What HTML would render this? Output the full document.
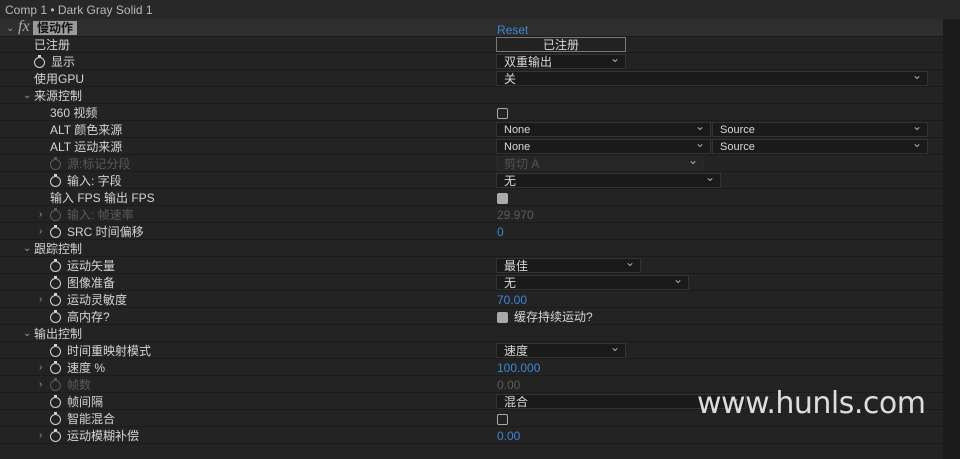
<!DOCTYPE html><html><head><meta charset="utf-8"><style>
body{margin:0;width:960px;height:459px;background:#232323;overflow:hidden;position:relative;font-family:"Liberation Sans","Noto Sans CJK SC",sans-serif;font-size:12px;color:#d4d4d4}
.hdr{position:absolute;left:0;top:0;width:960px;height:19px;background:#282828;color:#b8b8b8;font-size:12px;line-height:21px;padding-left:5px;box-sizing:border-box}
.strip{position:absolute;left:943px;top:19px;width:17px;height:440px;background:#1c1c1c}
.row{position:absolute;left:0;width:943px;height:17px;border-bottom:1px solid #1b1b1b;box-sizing:border-box}
.l{position:absolute;top:1px;line-height:16px;white-space:nowrap}
.dim{color:#5a5a5a}
.sw{display:inline-block;width:9px;height:9px;border:1.5px solid currentColor;border-radius:50%;vertical-align:-2px;margin-right:6px;position:relative}
.sw:before{content:"";position:absolute;left:3px;top:-3px;width:3px;height:1.5px;background:currentColor}
.tw{position:absolute;top:1px;line-height:16px;color:#999;font-size:10px}
.dd{position:absolute;top:1px;height:15px;background:#1a1a1a;border:1px solid #333;box-sizing:border-box;line-height:14px;padding-left:7px;font-size:12px;color:#d8d8d8}
.dd:after{content:"⌄";position:absolute;right:5px;top:-4px;color:#aaa;font-size:12px}
.dd.n:after{content:none}
.dd.s{font-size:11px}
.blue{color:#3a86d6}
.cb{position:absolute;top:4px;width:9px;height:9px;border:1.5px solid #aaa;border-radius:2px}
.cbk{background:#aaa}
</style></head><body>
<div class="hdr">Comp 1 • Dark Gray Solid 1</div>
<div class="strip"></div>
<div class="row" style="top:19px;height:18px;background:#2e2e2e">
<span class="tw" style="left:6px;top:2px">⌄</span><span class="l" style="left:18px;font-style:italic;color:#aaa;font-family:'Liberation Serif',serif;font-size:16px;top:0">fx</span>
<span class="l" style="left:33px;background:#9a9a9a;color:#111;font-weight:bold;padding:0 4px;top:2px;line-height:14px">慢动作</span>
<span class="l blue" style="left:497px;top:3px">Reset</span></div>

<div class="row" style="top:36px"><span class="l" style="left:34px">已注册</span><div class="dd n" style="left:496px;width:130px;border:1px solid #777;background:#222;text-align:center;padding:0;top:1px">已注册</div></div>
<div class="row" style="top:53px"><span class="l" style="left:34px"><i class="sw"></i>显示</span><div class="dd" style="left:496px;width:130px">双重输出</div></div>
<div class="row" style="top:70px"><span class="l" style="left:34px">使用GPU</span><div class="dd" style="left:496px;width:432px">关</div></div>
<div class="row" style="top:87px"><span class="tw" style="left:23px">⌄</span><span class="l" style="left:34px">来源控制</span></div>
<div class="row" style="top:104px"><span class="l" style="left:50px">360 视频</span><div class="cb" style="left:497px"></div></div>
<div class="row" style="top:121px"><span class="l" style="left:50px">ALT 颜色来源</span><div class="dd s" style="left:496px;width:215px">None</div><div class="dd s" style="left:712px;width:216px">Source</div></div>
<div class="row" style="top:138px"><span class="l" style="left:50px">ALT 运动来源</span><div class="dd s" style="left:496px;width:215px">None</div><div class="dd s" style="left:712px;width:216px">Source</div></div>
<div class="row" style="top:155px"><span class="l dim" style="left:50px"><i class="sw"></i>源:标记分段</span><div class="dd dim" style="left:496px;width:208px;background:#262626;border-color:#2a2a2a;color:#555">剪切 A</div></div>
<div class="row" style="top:172px"><span class="l" style="left:50px"><i class="sw"></i>输入: 字段</span><div class="dd" style="left:496px;width:225px">无</div></div>
<div class="row" style="top:189px"><span class="l" style="left:50px">输入 FPS  输出 FPS</span><div class="cb cbk" style="left:497px"></div></div>
<div class="row" style="top:206px"><span class="tw" style="left:39px">›</span><span class="l dim" style="left:50px"><i class="sw"></i>输入: 帧速率</span><span class="l dim" style="left:497px">29.970</span></div>
<div class="row" style="top:223px"><span class="tw" style="left:39px">›</span><span class="l" style="left:50px"><i class="sw"></i>SRC 时间偏移</span><span class="l blue" style="left:497px">0</span></div>
<div class="row" style="top:240px"><span class="tw" style="left:23px">⌄</span><span class="l" style="left:34px">跟踪控制</span></div>
<div class="row" style="top:257px"><span class="l" style="left:50px"><i class="sw"></i>运动矢量</span><div class="dd" style="left:496px;width:145px">最佳</div></div>
<div class="row" style="top:274px"><span class="l" style="left:50px"><i class="sw"></i>图像准备</span><div class="dd" style="left:496px;width:193px">无</div></div>
<div class="row" style="top:291px"><span class="tw" style="left:39px">›</span><span class="l" style="left:50px"><i class="sw"></i>运动灵敏度</span><span class="l blue" style="left:497px">70.00</span></div>
<div class="row" style="top:308px"><span class="l" style="left:50px"><i class="sw"></i>高内存?</span><div class="cb cbk" style="left:497px"></div><span class="l" style="left:514px">缓存持续运动?</span></div>
<div class="row" style="top:325px"><span class="tw" style="left:23px">⌄</span><span class="l" style="left:34px">输出控制</span></div>
<div class="row" style="top:342px"><span class="l" style="left:50px"><i class="sw"></i>时间重映射模式</span><div class="dd" style="left:496px;width:130px">速度</div></div>
<div class="row" style="top:359px"><span class="tw" style="left:39px">›</span><span class="l" style="left:50px"><i class="sw"></i>速度 %</span><span class="l blue" style="left:497px">100.000</span></div>
<div class="row" style="top:376px"><span class="tw" style="left:39px">›</span><span class="l dim" style="left:50px"><i class="sw"></i>帧数</span><span class="l dim" style="left:497px">0.00</span></div>
<div class="row" style="top:393px"><span class="l" style="left:50px"><i class="sw"></i>帧间隔</span><div class="dd" style="left:496px;width:250px">混合</div></div>
<div class="row" style="top:410px"><span class="l" style="left:50px"><i class="sw"></i>智能混合</span><div class="cb" style="left:497px"></div></div>
<div class="row" style="top:427px"><span class="tw" style="left:39px">›</span><span class="l" style="left:50px"><i class="sw"></i>运动模糊补偿</span><span class="l blue" style="left:497px">0.00</span></div>
<div style="position:absolute;left:697px;top:386px;font-size:30px;color:#dcdcdc;font-family:'DejaVu Sans',sans-serif;letter-spacing:-0.5px">www.hunls.com</div>
</body></html>
